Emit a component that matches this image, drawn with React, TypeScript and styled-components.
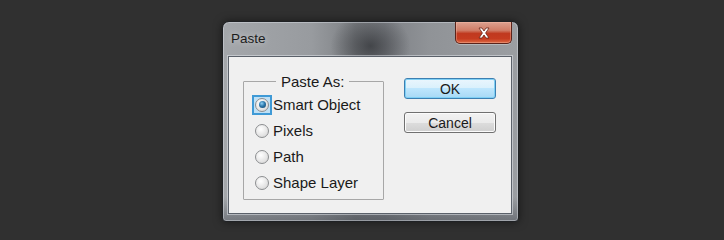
import React from "react";
import styled, {createGlobalStyle} from "styled-components";

const GlobalStyle = createGlobalStyle`
    html, body {
        margin: 0;
        padding: 0;
        background: #303030;
    }
    body {
        font-family: "Liberation Sans", Arial, sans-serif;
    }
`;

const Page = styled.div`
    width: 724px;
    height: 240px;
    background: #303030;
    padding: 21px 0 0 222px;
    box-sizing: border-box;
`;

const Window = styled.div`
    width: 297px;
    height: 201px;
    box-sizing: border-box;
    display: flex;
    flex-direction: column;
    border: 1px solid #1f2124;
    border-radius: 7px 7px 4px 4px;
    box-shadow: inset 0 0 0 1px rgba(220, 224, 230, 0.45), 0 0 8px rgba(0, 0, 0, 0.5);
    background:
        radial-gradient(ellipse 40px 34px at 50% 12%, rgba(48, 50, 54, 0.75), rgba(48, 50, 54, 0) 100%),
        linear-gradient(180deg, rgba(0, 0, 0, 0) 0%, rgba(0, 0, 0, 0) 88%, rgba(30, 36, 46, 0.35) 100%),
        linear-gradient(90deg, #a4a7ab 0%, #989b9f 30%, #7c7f83 45%, #7e8186 55%, #909397 70%, #9b9ea2 100%);
`;

const TitleBar = styled.div`
    height: 34px;
    display: flex;
    align-items: flex-start;
    padding: 0 6px 0 8px;
    flex-shrink: 0;
`;

const Title = styled.span`
    margin-top: 9px;
    font-size: 13.5px;
    color: #1c1c1c;
    text-shadow: 0 0 6px rgba(255, 255, 255, 0.55);
`;

const CloseButton = styled.div`
    margin-left: auto;
    width: 57px;
    height: 22px;
    box-sizing: border-box;
    border: 1px solid #5a231a;
    border-top: none;
    border-radius: 0 0 5px 5px;
    display: flex;
    align-items: center;
    justify-content: center;
    box-shadow: inset 0 0 0 1px rgba(255, 200, 180, 0.35), 0 1px 0 rgba(255, 255, 255, 0.3);
    background: linear-gradient(180deg, #dca190 0%, #d07c66 40%, #c0391f 55%, #c53c20 80%, #de6a44 100%);
`;

const Client = styled.div`
    flex: 1;
    margin: 0 6px 7px 5px;
    background: #f0f0f0;
    border: 1px solid #5b616a;
    box-shadow: 0 0 0 1px rgba(230, 234, 240, 0.5);
    display: flex;
    align-items: flex-start;
    padding: 16px 0 0 14px;
`;

const Group = styled.fieldset`
    width: 141px;
    height: 127px;
    box-sizing: border-box;
    margin: 0;
    border: 1px solid #a7a7a7;
    border-radius: 1px;
    padding: 4px 0 0 11px;
    display: flex;
    flex-direction: column;
    gap: 5px;
`;

const Legend = styled.legend`
    margin-left: 21px;
    padding: 0 5px 0 5px;
    font-size: 15px;
    color: #1a1a1a;
`;

const Option = styled.label`
    display: flex;
    align-items: center;
    height: 21px;
    font-size: 15px;
    color: #1a1a1a;
    gap: 4px;
`;

const RadioFrame = styled.span<{ $focused?: boolean }>`
    width: 20px;
    height: 20px;
    margin-left: -3px;
    margin-right: -3px;
    box-sizing: border-box;
    display: flex;
    align-items: center;
    justify-content: center;
    border: 2px solid ${p => p.$focused ? "#3f9ad6" : "transparent"};
    background: ${p => p.$focused ? "#bfe0f5" : "transparent"};
`;

const RadioCircle = styled.span<{ $checked?: boolean }>`
    width: 14px;
    height: 14px;
    box-sizing: border-box;
    border-radius: 50%;
    border: 1px solid #8c8e90;
    background: radial-gradient(circle at 40% 35%, #ffffff 0%, #e4e4e4 60%, #cfcfcf 100%);
    display: flex;
    align-items: center;
    justify-content: center;

    &::after {
        content: "";
        display: ${p => p.$checked ? "block" : "none"};
        width: 7px;
        height: 7px;
        border-radius: 50%;
        background: radial-gradient(circle at 40% 35%, #8fd0f5 0%, #2c79ad 45%, #123f63 100%);
    }
`;

const Buttons = styled.div`
    display: flex;
    flex-direction: column;
    gap: 13px;
    margin: 5px 0 0 20px;
`;

const Button = styled.div<{ $default?: boolean }>`
    width: 92px;
    height: 21px;
    box-sizing: border-box;
    border-radius: 3px;
    display: flex;
    align-items: center;
    justify-content: center;
    font-size: 14px;
    color: #1a1a1a;
    border: 1px solid ${p => p.$default ? "#3c7fb1" : "#707070"};
    box-shadow: inset 0 0 0 1px ${p => p.$default ? "#7fd0f5" : "#fbfbfb"};
    background: ${p => p.$default
        ? "linear-gradient(180deg, #eaf6fd 0%, #d9f0fc 50%, #bee6fd 50%, #a7d9f5 100%)"
        : "linear-gradient(180deg, #f2f2f2 0%, #ebebeb 50%, #dddddd 50%, #cfcfcf 100%)"};
`;

const options = ["Smart Object", "Pixels", "Path", "Shape Layer"];

const CloseGlyph = () => (
  <svg width="14" height="12" viewBox="0 0 14 12">
    <path d="M2 1 L5 1 L7 4 L9 1 L12 1 L8.6 6 L12 11 L9 11 L7 8 L5 11 L2 11 L5.4 6 Z"
          fill="#ffffff" stroke="#6b2416" strokeWidth="0.8" strokeLinejoin="round"/>
  </svg>
);

export default function App() {
  return (
    <Page>
      <GlobalStyle/>
      <Window>
        <TitleBar>
          <Title>Paste</Title>
          <CloseButton><CloseGlyph/></CloseButton>
        </TitleBar>
        <Client>
          <Group>
            <Legend>Paste As:</Legend>
            {options.map((o, i) => (
              <Option key={o}>
                <RadioFrame $focused={i === 0}>
                  <RadioCircle $checked={i === 0}/>
                </RadioFrame>
                {o}
              </Option>
            ))}
          </Group>
          <Buttons>
            <Button $default>OK</Button>
            <Button>Cancel</Button>
          </Buttons>
        </Client>
      </Window>
    </Page>
  );
}
